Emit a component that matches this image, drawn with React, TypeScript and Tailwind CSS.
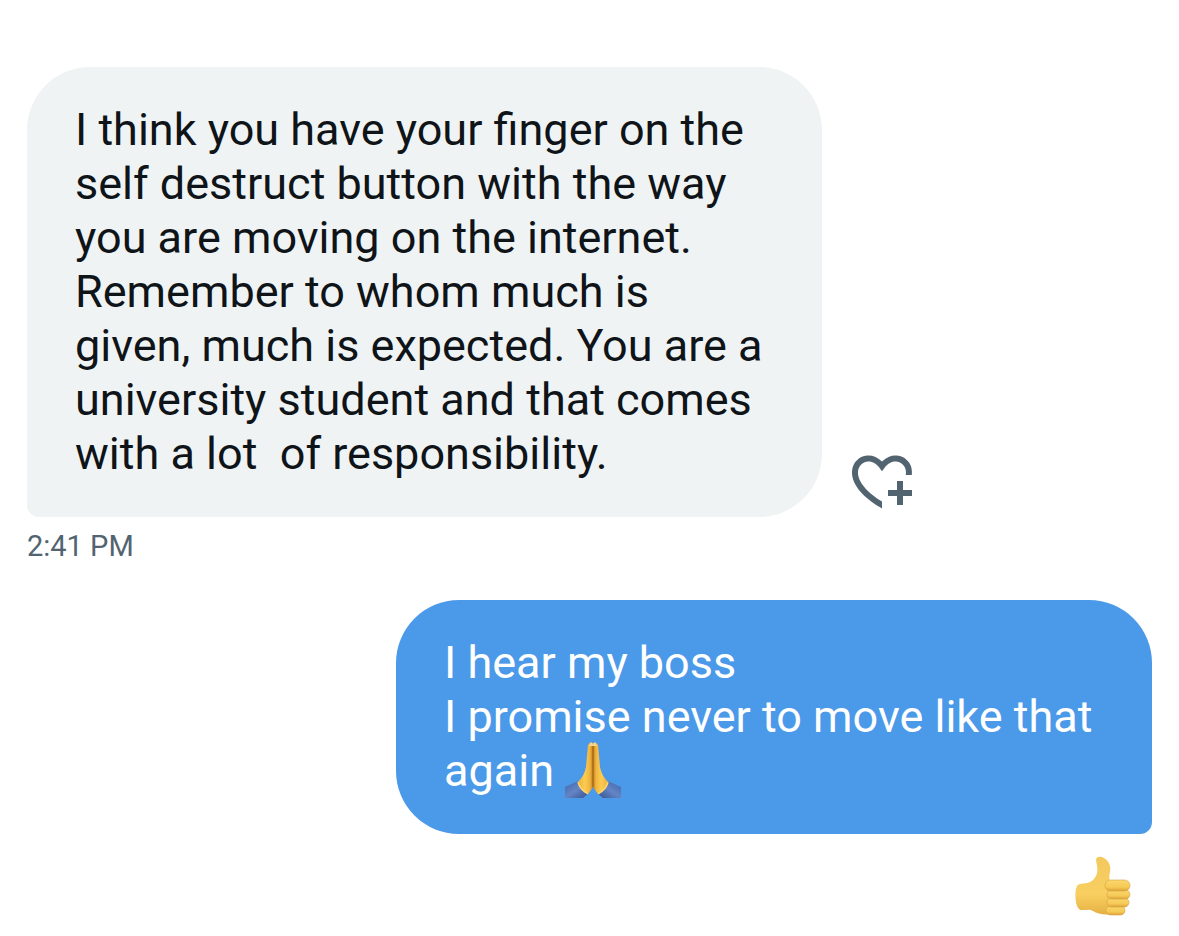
import type { ReactNode } from "react";

interface Message {
  text: string;
  time?: string;
}

const received: Message = {
  text: [
    "I think you have your finger on the",
    "self destruct button with the way",
    "you are moving on the internet.",
    "Remember to whom much is",
    "given, much is expected. You are a",
    "university student and that comes",
    "with a lot  of responsibility.",
  ].join("\n"),
  time: "2:41 PM",
};

const sent: Message = {
  text: ["I hear my boss", "I promise never to move like that", "again "].join("\n"),
};

function HeartPlusIcon() {
  return (
    <svg viewBox="0 0 24 24" className="h-[72px] w-[72px]" fill="currentColor" aria-hidden="true">
      <path d="M17 12v3h-3v2h3v3h2v-3h3v-2h-3v-3h-2zm-5 6.839c-3.871-2.34-6.053-4.639-7.127-6.609-1.112-2.04-1.031-3.7-.479-4.82.561-1.13 1.667-1.84 2.91-1.91 1.222-.06 2.68.51 3.892 2.16l.806 1.09.805-1.09c1.211-1.65 2.668-2.22 3.89-2.16 1.242.07 2.347.78 2.908 1.91.334.677.49 1.554.321 2.59h2.011c.153-1.283-.039-2.469-.539-3.48-.887-1.79-2.647-2.91-4.601-3.01-1.65-.09-3.367.56-4.796 2.01-1.43-1.45-3.147-2.1-4.798-2.01-1.954.1-3.714 1.22-4.601 3.01-.896 1.81-.846 4.17.514 6.67 1.353 2.48 4.003 5.12 8.382 7.67l.502.299v-2.32z" />
    </svg>
  );
}

function FoldedHands() {
  return (
    <svg viewBox="0 0 56 56" className="-my-1 inline-block h-14 w-14 align-[-8px]" role="img" aria-label="Folded hands">
      <defs>
        <linearGradient id="palm" x1="0" y1="0" x2="1" y2="0">
          <stop offset="0" stopColor="#eeb03a" />
          <stop offset="0.45" stopColor="#fbcb52" />
          <stop offset="0.8" stopColor="#f0b43e" />
          <stop offset="1" stopColor="#c07f20" />
        </linearGradient>
        <linearGradient id="sleeve" x1="0" y1="0" x2="1" y2="1">
          <stop offset="0" stopColor="#3f66ae" />
          <stop offset="0.5" stopColor="#6484c4" />
          <stop offset="1" stopColor="#34508f" />
        </linearGradient>
        <g id="hand">
          <path d="M0 45 13 39 24 51 18 56H0z" fill="url(#sleeve)" />
          <path d="M25 1c2-1 3 0 3 2v42c-1 2-3 4-5 7-5-2-9-6-10-12 4-4 7-9 8-15l2-22z" fill="url(#palm)" />
          <path d="M25 1c2-1 3 0 3 2v1h-4z" fill="#f5d68c" />
          <path d="M13 40c1 5 5 9 10 12" fill="none" stroke="#f9d873" strokeWidth="1.4" />
        </g>
      </defs>
      <use href="#hand" />
      <use href="#hand" transform="translate(56 0) scale(-1 1)" />
      <path d="M28 4v41" stroke="#a3661a" strokeWidth="1.2" />
    </svg>
  );
}

function ThumbsUp() {
  return (
    <svg viewBox="0 0 60 60" className="h-15 w-15" role="img" aria-label="Thumbs up">
      <defs>
        <linearGradient id="thumb" x1="0" y1="0" x2="0" y2="1">
          <stop offset="0" stopColor="#f3c95f" />
          <stop offset="0.65" stopColor="#f8cf60" />
          <stop offset="1" stopColor="#e6b044" />
        </linearGradient>
        <linearGradient id="finger" x1="0" y1="0" x2="0" y2="1">
          <stop offset="0" stopColor="#fbd86f" />
          <stop offset="0.65" stopColor="#f5c954" />
          <stop offset="1" stopColor="#dda33a" />
        </linearGradient>
      </defs>
      <path
        d="M24 4c0-4 5-4 8-2 5 3 7 8 6 14-1 4-1 6 0 9l6 4v27c-6 4-17 3-23-1-3-2-6-1-10-1-4 1-6-3-7-8-1-6-1-12 1-16 2-3 6-2 10-3 5-1 9-5 10-10 1-4 0-7-1-13z"
        fill="url(#thumb)"
      />
      <g fill="url(#finger)" stroke="#d6a044" strokeWidth="0.6">
        <rect x="34" y="50" width="19" height="9" rx="4.5" />
        <rect x="35" y="42" width="22" height="9" rx="4.5" />
        <rect x="35" y="34" width="23" height="9" rx="4.5" />
        <rect x="33" y="24" width="25" height="11" rx="5.5" />
      </g>
    </svg>
  );
}

function Bubble({ outgoing = false, children }: { outgoing?: boolean; children: ReactNode }) {
  return (
    <div
      className={`w-full rounded-[63px] px-12 py-9 text-[45px] leading-[54px] whitespace-pre-wrap ${
        outgoing ? "max-w-[756px] rounded-br-xl bg-[#4b99e9] text-white" : "max-w-[795px] rounded-bl-xl bg-[#eff3f4] text-[#0f1419]"
      }`}
    >
      {children}
    </div>
  );
}

export default function App() {
  return (
    <main className="flex flex-col bg-white px-[27px] pt-[67px] pb-5 font-[Roboto,sans-serif]">
      <section>
        <div className="flex items-end gap-6">
          <Bubble>{received.text}</Bubble>
          <button type="button" aria-label="Add reaction" className="shrink-0 text-[#536471]">
            <HeartPlusIcon />
          </button>
        </div>
        <time className="mt-2 block text-[29px] leading-[43px] text-[#536471]">{received.time}</time>
      </section>

      <section className="mt-8 flex flex-col items-end">
        <Bubble outgoing>
          {sent.text}
          <FoldedHands />
        </Bubble>
        <div className="mt-[22px] mr-5">
          <ThumbsUp />
        </div>
      </section>
    </main>
  );
}
